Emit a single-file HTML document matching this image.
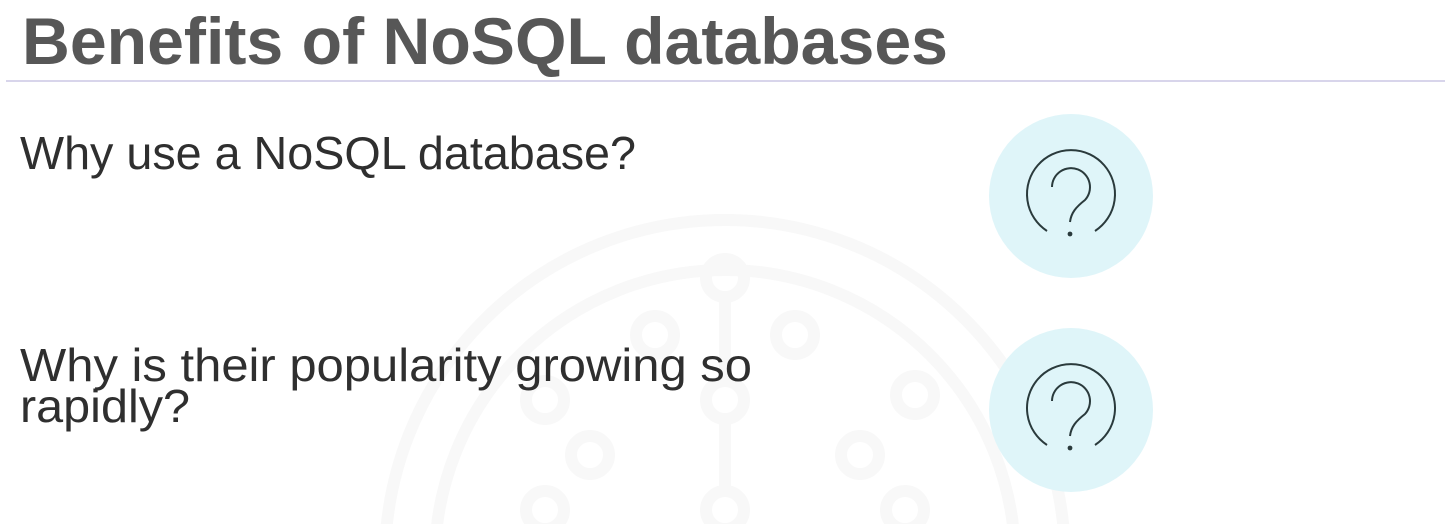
<!DOCTYPE html>
<html><head><meta charset="utf-8"><style>
html,body{margin:0;padding:0;background:#fff;width:1451px;height:524px;overflow:hidden}
svg{display:block}
</style></head><body>
<svg width="1451" height="524" viewBox="0 0 1451 524" xmlns="http://www.w3.org/2000/svg">
<rect width="1451" height="524" fill="#fff"/>
<g fill="none" stroke="#f8f8f8" stroke-width="12">
<circle cx="725" cy="560" r="340"/>
<circle cx="725" cy="560" r="290"/>
<circle cx="725" cy="278" r="19"/>
<circle cx="795" cy="335" r="19"/>
<circle cx="655" cy="335" r="19"/>
<circle cx="545" cy="400" r="19"/>
<circle cx="725" cy="400" r="19"/>
<circle cx="915" cy="395" r="19"/>
<circle cx="590" cy="455" r="19"/>
<circle cx="860" cy="455" r="19"/>
<circle cx="545" cy="510" r="19"/>
<circle cx="725" cy="510" r="19"/>
<circle cx="905" cy="510" r="19"/>
<path d="M725 297V381M725 419V491"/>
</g>
<text x="22" y="64" font-family="Liberation Sans, sans-serif" font-weight="bold" font-size="66" fill="#575757" textLength="926" lengthAdjust="spacingAndGlyphs">Benefits of NoSQL databases</text>
<rect x="6" y="80" width="1439" height="2" fill="#d8d5eb"/>
<g font-family="Liberation Sans, sans-serif" font-size="46" fill="#2f2f2f">
<text x="20" y="169" textLength="616" lengthAdjust="spacingAndGlyphs">Why use a NoSQL database?</text>
<text x="20" y="381" textLength="732" lengthAdjust="spacingAndGlyphs">Why is their popularity growing so</text>
<text x="20" y="422" textLength="170" lengthAdjust="spacingAndGlyphs">rapidly?</text>
</g>
<circle cx="1071" cy="196" r="82" fill="#dff5f9"/>
<circle cx="1071" cy="410" r="82" fill="#dff5f9"/>
<g fill="none" stroke="#2a3a3c" stroke-width="2">
<g transform="translate(1071,194)">
<path d="M-24 37A44 44 0 1 1 24 37"/>
<path d="M-19 -7A19 19 0 1 1 14 6C5 13 0 19 -1 28"/>
</g>
<g transform="translate(1071,408)">
<path d="M-24 37A44 44 0 1 1 24 37"/>
<path d="M-19 -7A19 19 0 1 1 14 6C5 13 0 19 -1 28"/>
</g>
</g>
<circle cx="1070" cy="234" r="2.4" fill="#2a3a3c"/>
<circle cx="1070" cy="448" r="2.4" fill="#2a3a3c"/>
</svg>
</body></html>
